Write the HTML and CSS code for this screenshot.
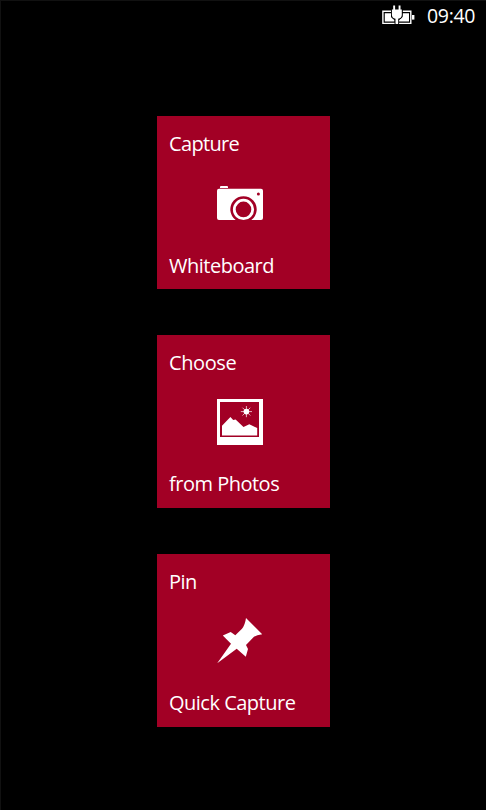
FILE: index.html
```html
<!DOCTYPE html>
<html lang="en">
<head>
<meta charset="utf-8">
<title>Capture</title>
<link rel="stylesheet" href="styles.css">
</head>
<body>
<div class="screen">
  <header class="status">
    <svg class="battery" width="34" height="20" viewBox="0 0 34 20">
      <path d="M10 6.3H1.9V18.4H29.8V6.3H21.5" fill="none" stroke="#fff" stroke-width="1.4"/>
      <path d="M3.8 8.2H10V12L13.5 15.2V16.6H3.8ZM28 8.2H21.5V12L18 15.2V16.6H28Z" fill="#fff"/>
      <rect x="31" y="10" width="2.4" height="4.6" fill="#fff"/>
      <path d="M12.2 0.5h1.9V4.5h3.5V0.5h1.9V4.5H20.8v5.4q0 3-3.6 3.8V19h-2.7v-5.3q-3.6-.8-3.6-3.8V4.5h1.3Z" fill="#fff" stroke="#000" stroke-width="1.8" paint-order="stroke"/>
    </svg>
    <span class="clock">09:40</span>
  </header>
  <main class="tiles">
    <button class="tile">
      <span class="label capture">Capture</span>
      <svg class="icon" viewBox="0 0 46 46">
        <path d="M3 8V7q0-1 1-1h6q1 0 1 1v1Z" fill="#fff"/>
        <path d="M2 8.8H44Q46 8.8 46 10.8V38Q46 40 44 40H34.3A13.2 13.2 0 1 0 18.7 40H2Q0 40 0 38V10.8Q0 8.8 2 8.8Z" fill="#fff"/>
        <circle cx="26.5" cy="29.4" r="9.2" fill="none" stroke="#fff" stroke-width="2.8"/>
        <circle cx="41.4" cy="14" r="1.5" fill="#a20025"/>
      </svg>
      <span class="label whiteboard">Whiteboard</span>
    </button>
    <button class="tile">
      <span class="label choose">Choose</span>
      <svg class="icon" viewBox="0 0 46 46">
        <path fill="#fff" fill-rule="evenodd" d="M0 0H46V46H0ZM3 3V38H42V3Z"/>
        <path fill="#fff" d="M5 36.6V26.8L13.4 18L16.2 21L18.6 20.4L26.5 28.1L32.3 25.2L40.2 29V36.6Z"/>
        <circle cx="29.4" cy="12.6" r="2.8" fill="#fff"/>
        <path d="M29.4 7v11.2M23.8 12.6H35M25.5 8.7l7.8 7.8M33.3 8.7l-7.8 7.8" stroke="#fff" stroke-width=".7"/>
      </svg>
      <span class="label photos">from Photos</span>
    </button>
    <button class="tile">
      <span class="label pin">Pin</span>
      <svg class="icon" viewBox="0 0 46 46">
        <path fill="#fff" d="M29 0L45.2 16.3Q38 17 35.5 20.2L29 27L31 31L28.8 38.8L19.7 30.7L.2 45.2L14 25.7L5.8 17.5L13.7 14L18.3 17.3L25 10.8Q28 7 29 0Z"/>
      </svg>
      <span class="label quick">Quick Capture</span>
    </button>
  </main>
</div>
</body>
</html>
```
FILE: styles.css
```css
* { box-sizing: border-box; }
body {
  margin: 0;
  background: #000;
  color: #fff;
  font-family: "Open Sans", "Noto Sans", sans-serif;
}
.screen {
  height: 810px;
  border-top: 1px solid #111;
  border-left: 1px solid #111;
  overflow: hidden;
}
.status {
  height: 30px;
  display: flex;
  justify-content: flex-end;
  padding: 4px 11px 0 0;
}
.battery { margin-right: 12px; }
.clock {
  width: 48px;
  font-size: 19.5px;
  line-height: 22px;
  letter-spacing: -0.3px;
  white-space: nowrap;
}
.tiles {
  display: flex;
  flex-direction: column;
  gap: 45.7px;
  padding: 85.3px 0 0 156px;
}
.tile {
  width: 173px;
  height: 173px;
  padding: 14px 12px 0;
  border: 0;
  background: #a20025;
  color: inherit;
  font: inherit;
  display: flex;
  flex-direction: column;
  align-items: flex-start;
  justify-content: flex-start;
}
.label {
  font-size: 20px;
  line-height: 27px;
  letter-spacing: -0.5px;
  white-space: nowrap;
}
.capture { letter-spacing: -0.65px; }
.choose { letter-spacing: -0.4px; }
.icon {
  flex: none;
  width: 46px;
  height: 46px;
  margin: 23px 0 25.5px 48px;
}
```
